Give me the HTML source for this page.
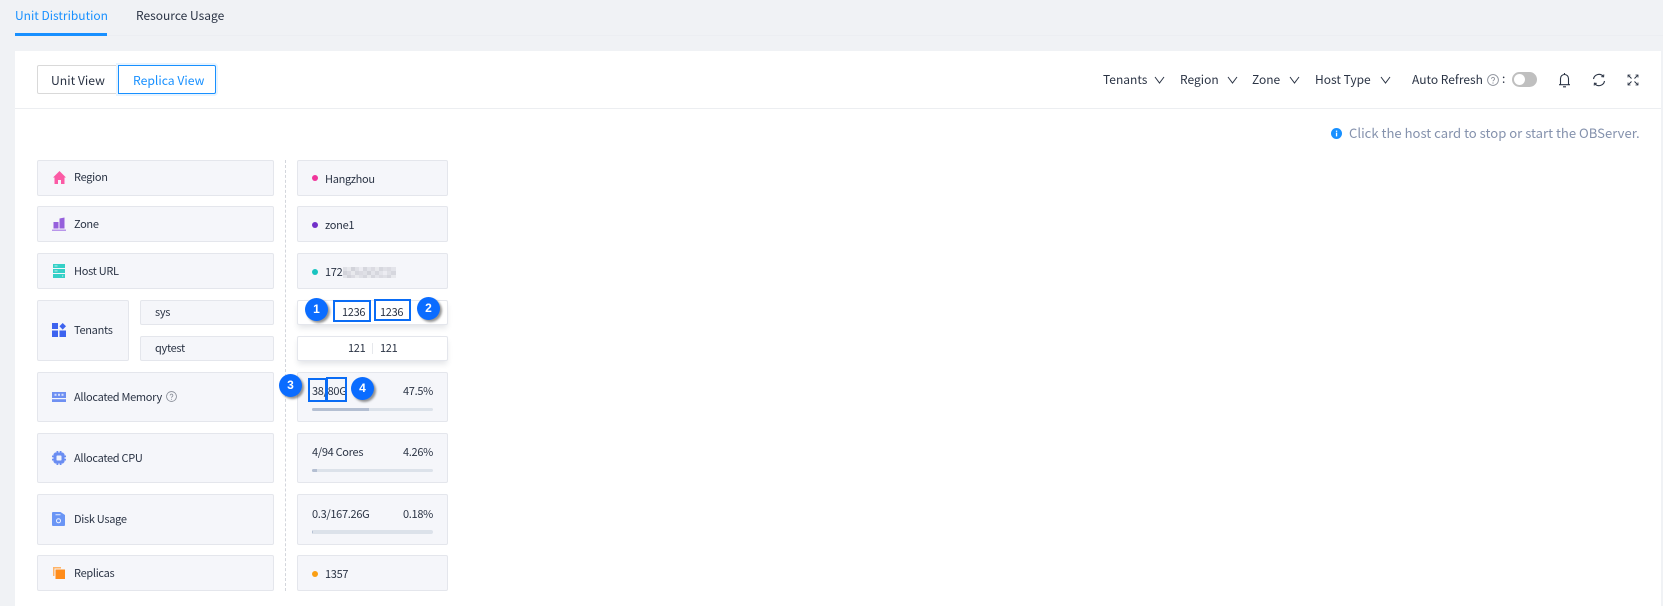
<!DOCTYPE html>
<html>
<head>
<meta charset="utf-8">
<style>
html,body{margin:0;padding:0;width:1663px;height:606px;overflow:hidden;background:#f0f2f5;}
body{position:relative;font-family:"Noto Sans CJK SC","Liberation Sans",sans-serif;font-size:12px;color:#2b3445;}
.a{position:absolute;white-space:nowrap;line-height:16px;}
.s{font-size:11px;letter-spacing:-.3px;}
.card{position:absolute;box-sizing:border-box;background:#f5f6fa;border:1px solid #e4e6ec;border-radius:2px;}
.w{background:#fff;box-shadow:0 4px 6px -1px rgba(60,70,90,.14);}
.dot{position:absolute;width:6px;height:6px;border-radius:50%;}
.bar{position:absolute;left:312px;width:121px;background:#dce2ea;border-radius:2px;overflow:hidden;}
.bar i{display:block;height:100%;background:#b4bfd2;}
.box{position:absolute;box-sizing:border-box;border:2px solid #0a6cf5;}
.c{position:absolute;width:23px;height:23px;border-radius:50%;background:#0a6cff;color:#fff;font:bold 12px/23px "Liberation Sans",sans-serif;text-align:center;box-shadow:2px 2px 2px rgba(60,60,60,.55);}
svg{position:absolute;display:block;}
</style>
</head>
<body>
<div class="a" style="left:15px;top:8px;font-size:12px;color:#1890ff;">Unit Distribution</div>
<div class="a" style="left:136px;top:8px;font-size:12px;color:#2b3445;">Resource Usage</div>
<div style="position:absolute;left:15px;top:35px;width:1648px;height:1px;background:#eceef2;"></div>
<div style="position:absolute;left:15px;top:33px;width:92px;height:3px;background:#1890ff;"></div>

<div style="position:absolute;left:15px;top:51px;width:1646px;height:555px;background:#fff;"></div>
<div style="position:absolute;left:15px;top:108px;width:1646px;height:1px;background:#eceef1;"></div>

<div style="position:absolute;box-sizing:border-box;left:37px;top:65px;width:82px;height:29px;border:1px solid #d9d9d9;border-radius:2px 0 0 2px;"></div>
<div style="position:absolute;box-sizing:border-box;left:118px;top:65px;width:98px;height:29px;border:1px solid #1890ff;border-radius:0 2px 2px 0;box-shadow:0 0 0 2px #e8f4ff;"></div>
<div class="a" style="left:51px;top:72px;font-size:12.2px;">Unit View</div>
<div class="a" style="left:133px;top:72px;font-size:12.2px;color:#1890ff;">Replica View</div>

<div class="a" style="left:1103px;top:72px;">Tenants</div>
<svg style="left:1154px;top:75px" width="11" height="10" viewBox="0 0 11 10"><path d="M1 2l4.500 6L10 2" fill="none" stroke="#2b3445" stroke-width="1"/></svg>
<div class="a" style="left:1180px;top:72px;">Region</div>
<svg style="left:1227px;top:75px" width="11" height="10" viewBox="0 0 11 10"><path d="M1 2l4.500 6L10 2" fill="none" stroke="#2b3445" stroke-width="1"/></svg>
<div class="a" style="left:1252px;top:72px;">Zone</div>
<svg style="left:1289px;top:75px" width="11" height="10" viewBox="0 0 11 10"><path d="M1 2l4.500 6L10 2" fill="none" stroke="#2b3445" stroke-width="1"/></svg>
<div class="a" style="left:1315px;top:72px;">Host Type</div>
<svg style="left:1380px;top:75px" width="11" height="10" viewBox="0 0 11 10"><path d="M1 2l4.500 6L10 2" fill="none" stroke="#2b3445" stroke-width="1"/></svg>
<div class="a" style="left:1412px;top:72px;">Auto Refresh</div>
<svg style="left:1487px;top:74px" width="12" height="12" viewBox="0 0 12 12"><circle cx="6" cy="6" r="5.400" fill="none" stroke="#8a8f99" stroke-width=".9"/><path d="M4.500 4.800a1.500 1.500 0 1 1 2.300 1.300c-.5.300-.8.600-.8 1.200" fill="none" stroke="#8a8f99" stroke-width=".9"/><circle cx="6" cy="9" r=".6" fill="#8a8f99"/></svg>
<div class="a" style="left:1502px;top:71px;">:</div>
<div style="position:absolute;left:1512px;top:72px;width:25px;height:15px;border-radius:8px;background:#bfbfbf;"></div>
<div style="position:absolute;left:1514px;top:74px;width:11px;height:11px;border-radius:50%;background:#fff;"></div>
<svg style="left:1558px;top:72px" width="13" height="16" viewBox="0 0 13 16"><path d="M2.500 12.500V6.500a4 4 0 0 1 8 0v6M1 12.700h11M5 14.800h3M6.500 1v1.500" fill="none" stroke="#2b3445" stroke-width="1.100"/></svg>
<svg style="left:1592px;top:73px" width="14" height="14" viewBox="0 0 14 14"><path d="M1.500 6A5.600 5.600 0 0 1 11 3M12.500 8A5.600 5.600 0 0 1 3 11" fill="none" stroke="#2b3445" stroke-width="1.100"/><path d="M11.800 1.500l-.2 2.300-2.300-.2M2.200 12.500l.2-2.300 2.300.2" fill="none" stroke="#2b3445" stroke-width="1"/></svg>
<svg style="left:1627px;top:74px" width="12" height="12" viewBox="0 0 12 12"><path d="M1 1l3.500 3.500M11 1L7.500 4.500M1 11l3.500-3.500M11 11L7.500 7.500" fill="none" stroke="#2b3445" stroke-width="1"/><path d="M1 3.500V1h2.500M11 3.500V1H8.500M1 8.500V11h2.500M11 8.500V11H8.500" fill="none" stroke="#2b3445" stroke-width=".8"/></svg>

<svg style="left:1331px;top:128px" width="11" height="11" viewBox="0 0 11 11"><circle cx="5.500" cy="5.500" r="5.500" fill="#1890ff"/><rect x="4.900" y="4.600" width="1.300" height="3.800" fill="#fff"/><rect x="4.900" y="2.600" width="1.300" height="1.300" fill="#fff"/></svg>
<div class="a" style="left:1349px;top:125px;font-size:13.1px;color:#8592ad;">Click the host card to stop or start the OBServer.</div>

<div style="position:absolute;left:285px;top:160px;height:431px;border-left:1px dashed #d3d6dc;"></div>

<div class="card" style="left:37px;top:160px;width:237px;height:36px;"></div>
<div class="card" style="left:37px;top:206px;width:237px;height:36px;"></div>
<div class="card" style="left:37px;top:253px;width:237px;height:36px;"></div>
<div class="card" style="left:37px;top:300px;width:92px;height:61px;"></div>
<div class="card" style="left:140px;top:300px;width:134px;height:25px;"></div>
<div class="card" style="left:140px;top:336px;width:134px;height:25px;"></div>
<div class="card" style="left:37px;top:372px;width:237px;height:50px;"></div>
<div class="card" style="left:37px;top:433px;width:237px;height:50px;"></div>
<div class="card" style="left:37px;top:494px;width:237px;height:51px;"></div>
<div class="card" style="left:37px;top:555px;width:237px;height:36px;"></div>

<svg style="left:53px;top:171px" width="13" height="13" viewBox="0 0 13 13"><path d="M6.500 0L13 6.500H11.500V13H8V9H5V13H1.500V6.500H0z" fill="#fb5aa5"/></svg>
<svg style="left:52px;top:217px" width="14" height="14" viewBox="0 0 14 14"><path d="M1.500 5h5v6.500h-5zM7.500 1.500L12.500 .5V11.500h-5z" fill="#9660dc"/><rect y="12.500" width="14" height="1.500" fill="#b895ea"/></svg>
<svg style="left:53px;top:264px" width="12" height="14" viewBox="0 0 12 14"><rect width="12" height="4" fill="#35d0c7"/><rect y="5" width="12" height="4" fill="#35d0c7"/><rect y="10" width="12" height="4" fill="#35d0c7"/><rect x="1.500" y="1.300" width="3" height="1.200" fill="#a5ebe6"/><rect x="1.500" y="6.300" width="3" height="1.200" fill="#a5ebe6"/><rect x="9" y="11.300" width="1.200" height="1.400" fill="#a5ebe6"/></svg>
<svg style="left:52px;top:323px" width="14" height="14" viewBox="0 0 14 14"><rect width="6" height="6" fill="#3d63ef"/><rect y="7.500" width="6" height="6.500" fill="#3d63ef"/><rect x="7.500" y="7.500" width="6.500" height="6.500" fill="#3d63ef"/><path d="M10.700 0l3.300 3.300-3.300 3.300-3.300-3.300z" fill="#3d63ef"/></svg>
<svg style="left:52px;top:392px" width="14" height="10" viewBox="0 0 14 10"><path d="M0 0h14v6H0z" fill="#6f90f2"/><rect x="2.500" y="1.800" width="2" height="2" fill="#d6e0fc"/><rect x="6" y="1.800" width="2" height="2" fill="#d6e0fc"/><rect x="9.500" y="1.800" width="2" height="2" fill="#d6e0fc"/><path d="M0 7.200h14V10H0z" fill="#6f90f2"/></svg>
<svg style="left:52px;top:451px" width="14" height="14" viewBox="0 0 14 14"><path d="M3 1.500h1.500V0h1.800v1.500h1.400V0h1.800v1.500H11L12.500 3V4.500H14v1.800h-1.500v1.400H14v1.800h-1.500V11L11 12.500H9.500V14H7.700v-1.500H6.300V14H4.500v-1.500H3L1.500 11V9.500H0V7.700h1.500V6.300H0V4.500h1.500V3z" fill="#6a8df2"/><rect x="4.500" y="4.500" width="5" height="5" rx=".8" fill="#f0f3fc"/></svg>
<svg style="left:52px;top:512px" width="13" height="14" viewBox="0 0 13 14"><path d="M1 0h7.500L13 3v10a1 1 0 0 1-1 1H1a1 1 0 0 1-1-1V1a1 1 0 0 1 1-1z" fill="#6a95f5"/><rect x="3.500" y="2" width="5" height="1.300" fill="#c9d8fb"/><circle cx="6.500" cy="8.800" r="2" fill="none" stroke="#eef3fe" stroke-width="1"/></svg>
<svg style="left:53px;top:567px" width="12" height="12" viewBox="0 0 12 12"><path d="M0 0h8v1.500H1.500V9H0z" fill="#ffb366"/><rect x="2.500" y="2.500" width="9.500" height="9.500" fill="#ff8c1a"/></svg>

<div class="a s" style="left:74px;top:169px;">Region</div>
<div class="a s" style="left:74px;top:216px;">Zone</div>
<div class="a s" style="left:74px;top:263px;">Host URL</div>
<div class="a s" style="left:74px;top:322px;">Tenants</div>
<div class="a s" style="left:155px;top:304px;">sys</div>
<div class="a s" style="left:155px;top:340px;">qytest</div>
<div class="a s" style="left:74px;top:389px;">Allocated Memory</div>
<svg style="left:166px;top:391px" width="11" height="11" viewBox="0 0 12 12"><circle cx="6" cy="6" r="5.400" fill="none" stroke="#8a8f99" stroke-width=".9"/><path d="M4.500 4.800a1.500 1.500 0 1 1 2.300 1.300c-.5.300-.8.600-.8 1.200" fill="none" stroke="#8a8f99" stroke-width=".9"/><circle cx="6" cy="9" r=".6" fill="#8a8f99"/></svg>
<div class="a s" style="left:74px;top:450px;">Allocated CPU</div>
<div class="a s" style="left:74px;top:511px;">Disk Usage</div>
<div class="a s" style="left:74px;top:565px;">Replicas</div>

<div class="card" style="left:297px;top:160px;width:151px;height:36px;"></div>
<div class="card" style="left:297px;top:206px;width:151px;height:36px;"></div>
<div class="card" style="left:297px;top:253px;width:151px;height:36px;"></div>
<div class="card w" style="left:297px;top:300px;width:151px;height:25px;"></div>
<div class="card w" style="left:297px;top:336px;width:151px;height:25px;"></div>
<div class="card" style="left:297px;top:372px;width:151px;height:50px;"></div>
<div class="card" style="left:297px;top:433px;width:151px;height:50px;"></div>
<div class="card" style="left:297px;top:494px;width:151px;height:51px;"></div>
<div class="card" style="left:297px;top:555px;width:151px;height:36px;"></div>

<div class="dot" style="left:312px;top:175px;background:#f0359b;"></div>
<div class="a s" style="left:325px;top:171px;">Hangzhou</div>
<div class="dot" style="left:312px;top:222px;background:#7231c9;"></div>
<div class="a s" style="left:325px;top:217px;">zone1</div>
<div class="dot" style="left:312px;top:269px;background:#19c4c0;"></div>
<div class="a s" style="left:325px;top:264px;">172</div>
<svg style="left:343px;top:266px" width="54" height="13" viewBox="0 0 54 13"><g fill="#c9cad2"><rect x="0" y="1" width="4" height="4" opacity=".5"/><rect x="0" y="5" width="4" height="4" opacity=".8"/><rect x="0" y="9" width="4" height="3" opacity=".4"/><rect x="4" y="1" width="4" height="4" opacity=".3"/><rect x="4" y="5" width="4" height="4" opacity=".6"/><rect x="4" y="9" width="4" height="3" opacity=".8"/><rect x="8" y="1" width="4" height="4" opacity=".8"/><rect x="8" y="5" width="4" height="4" opacity=".3"/><rect x="8" y="9" width="4" height="3" opacity=".6"/><rect x="12" y="1" width="4" height="4" opacity=".5"/><rect x="12" y="5" width="4" height="4" opacity=".7"/><rect x="12" y="9" width="4" height="3" opacity=".3"/><rect x="16" y="1" width="4" height="4" opacity=".2"/><rect x="16" y="5" width="4" height="4" opacity=".6"/><rect x="16" y="9" width="4" height="3" opacity=".5"/><rect x="20" y="1" width="4" height="4" opacity=".7"/><rect x="20" y="5" width="4" height="4" opacity=".5"/><rect x="20" y="9" width="4" height="3" opacity=".7"/><rect x="24" y="1" width="4" height="4" opacity=".4"/><rect x="24" y="5" width="4" height="4" opacity=".8"/><rect x="24" y="9" width="4" height="3" opacity=".3"/><rect x="28" y="1" width="4" height="4" opacity=".6"/><rect x="28" y="5" width="4" height="4" opacity=".4"/><rect x="28" y="9" width="4" height="3" opacity=".7"/><rect x="32" y="1" width="4" height="4" opacity=".3"/><rect x="32" y="5" width="4" height="4" opacity=".7"/><rect x="32" y="9" width="4" height="3" opacity=".4"/><rect x="36" y="1" width="4" height="4" opacity=".7"/><rect x="36" y="5" width="4" height="4" opacity=".4"/><rect x="36" y="9" width="4" height="3" opacity=".6"/><rect x="40" y="1" width="4" height="4" opacity=".5"/><rect x="40" y="5" width="4" height="4" opacity=".2"/><rect x="40" y="9" width="4" height="3" opacity=".5"/><rect x="44" y="1" width="4" height="4" opacity=".6"/><rect x="44" y="5" width="4" height="4" opacity=".5"/><rect x="44" y="9" width="4" height="3" opacity=".7"/><rect x="48" y="1" width="5" height="4" opacity=".4"/><rect x="48" y="5" width="5" height="4" opacity=".7"/><rect x="48" y="9" width="5" height="3" opacity=".3"/></g></svg>

<div class="a s" style="left:342px;top:304px;">1236</div>
<div class="a s" style="left:380px;top:304px;">1236</div>
<div class="box" style="left:333px;top:300px;width:38px;height:22px;"></div>
<div class="box" style="left:374px;top:299px;width:37px;height:22px;"></div>
<div class="c" style="left:305px;top:298px;">1</div>
<div class="c" style="left:417px;top:297px;">2</div>

<div class="a s" style="left:348px;top:340px;">121</div>
<div style="position:absolute;left:372px;top:343px;width:1px;height:11px;background:#e6e8ec;"></div>
<div class="a s" style="left:380px;top:340px;">121</div>

<div class="a s" style="left:312px;top:383px;">38/80G</div>
<div class="box" style="left:308px;top:378px;width:19px;height:24px;"></div>
<div class="box" style="left:326px;top:377px;width:21px;height:25px;"></div>
<div class="a s" style="right:1230px;top:383px;">47.5%</div>
<div class="bar" style="top:408px;height:3px;"><i style="width:57px"></i></div>
<div class="c" style="left:279px;top:374px;">3</div>
<div class="c" style="left:351px;top:377px;">4</div>

<div class="a s" style="left:312px;top:444px;">4/94 Cores</div>
<div class="a s" style="right:1230px;top:444px;">4.26%</div>
<div class="bar" style="top:469px;height:3px;"><i style="width:5px"></i></div>

<div class="a s" style="left:312px;top:506px;">0.3/167.26G</div>
<div class="a s" style="right:1230px;top:506px;">0.18%</div>
<div class="bar" style="top:530px;height:4px;"><i style="width:1px"></i></div>

<div class="dot" style="left:312px;top:571px;background:#fa9f14;"></div>
<div class="a s" style="left:325px;top:566px;">1357</div>
</body>
</html>
